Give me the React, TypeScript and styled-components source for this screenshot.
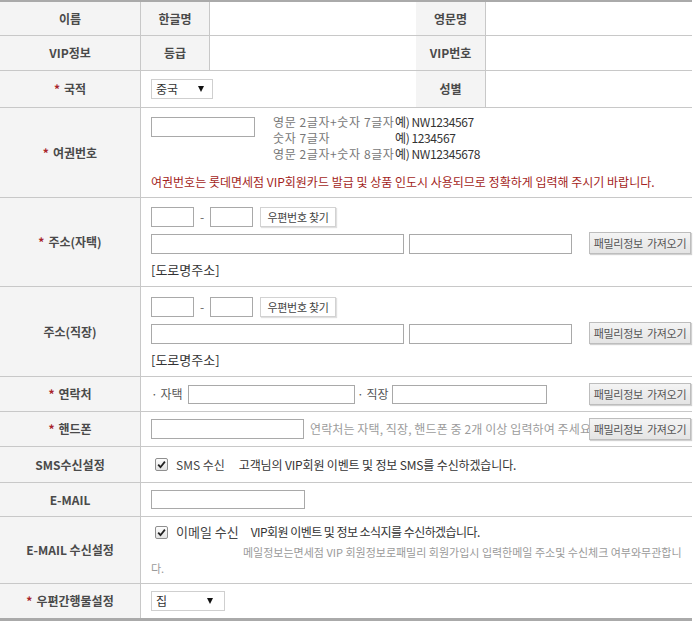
import React from 'react';
import styled, { createGlobalStyle } from 'styled-components';

const GlobalStyle = createGlobalStyle`
  html, body {
    margin: 0;
    padding: 0;
    background: #fff;
  }
  body {
    font-family: 'Noto Sans CJK KR', 'Noto Sans', sans-serif;
    font-size: 12px;
    line-height: 16px;
    color: #333;
  }
  * {
    box-sizing: border-box;
  }
`;

const Form = styled.div`
  width: 692px;
  border-top: 2px solid #aaa;
  border-bottom: 3px solid #aaa;
`;

const Row = styled.div<{ $h: number; $cols?: string }>`
  display: grid;
  grid-template-columns: ${(p) => p.$cols ?? '141px 1fr'};
  height: ${(p) => p.$h}px;
  border-bottom: 1px solid #c8c8c8;

  &:last-child {
    border-bottom: 0;
  }
`;

const Label = styled.div`
  display: flex;
  align-items: center;
  justify-content: center;
  background: #f4f4f4;
  border-right: 1px solid #c8c8c8;
  font-weight: bold;
  font-size: 12px;
  color: #4a4a4a;
  white-space: nowrap;
`;

const Star = styled.span`
  color: #a8242a;
  margin-right: 4px;
  font-weight: bold;
`;

const Cell = styled.div<{ $top?: number }>`
  display: flex;
  flex-direction: column;
  justify-content: ${(p) => (p.$top !== undefined ? 'flex-start' : 'center')};
  padding: ${(p) => p.$top ?? 0}px 1px 0 10px;
  min-width: 0;
`;

const Line = styled.div<{ $mt?: number; $top?: boolean }>`
  display: flex;
  align-items: ${(p) => (p.$top ? 'flex-start' : 'center')};
  margin-top: ${(p) => p.$mt ?? 0}px;
  min-width: 0;
`;

const TextBox = styled.input<{ $w: number; $h?: number; $mt?: number }>`
  flex: none;
  width: ${(p) => p.$w}px;
  height: ${(p) => p.$h ?? 20}px;
  margin: ${(p) => p.$mt ?? 0}px 0 0 0;
  padding: 0 3px;
  border: 1px solid #a9a9a9;
  background: #fff;
  font: inherit;
  outline: none;
`;

const SelectBox = styled.div<{ $w: number; $pr: number }>`
  flex: none;
  display: flex;
  align-items: center;
  justify-content: space-between;
  width: ${(p) => p.$w}px;
  height: 20px;
  padding: 0 ${(p) => p.$pr}px 0 4px;
  border: 1px solid #cfcfcf;
  background: #fff;
  color: #333;
`;

const Arrow = styled.span`
  width: 0;
  height: 0;
  border-left: 3.5px solid transparent;
  border-right: 3.5px solid transparent;
  border-top: 6px solid #111;
`;

const Hints = styled.div`
  flex: none;
  width: 122px;
  margin-left: 18px;
  color: #777;
  letter-spacing: 0.6px;
  white-space: nowrap;
`;

const Examples = styled.div`
  color: #333;
  letter-spacing: -0.4px;
  white-space: nowrap;
`;

const Notice = styled.div`
  margin-top: 12px;
  color: #a31e22;
  white-space: nowrap;
`;

const Dash = styled.span`
  flex: none;
  width: 16px;
  text-align: center;
  color: #666;
`;

const ZipButton = styled.button`
  flex: none;
  width: 76px;
  height: 20px;
  margin-left: 7px;
  padding: 0;
  border: 1px solid #d2d2d2;
  background: #fff;
  box-shadow: 1px 1px 1px rgba(0, 0, 0, 0.12);
  font-family: inherit;
  font-size: 11px;
  color: #444;
  letter-spacing: -0.3px;
`;

const FamilyButton = styled.button<{ $mt?: number }>`
  flex: none;
  width: 102px;
  height: 22px;
  margin: ${(p) => p.$mt ?? 0}px 0 0 auto;
  padding: 0;
  border: 1px solid #bdbdbd;
  background: linear-gradient(#f4f4f4, #e4e4e4);
  box-shadow: 1px 1px 1px rgba(0, 0, 0, 0.18);
  font-family: inherit;
  font-size: 11px;
  color: #555;
  word-spacing: 2px;
  letter-spacing: -0.3px;
`;

const RoadName = styled.div`
  margin-top: 8px;
  font-size: 13px;
  color: #333;
`;

const Tag = styled.span<{ $w: number; $ml?: number }>`
  flex: none;
  width: ${(p) => p.$w}px;
  margin-left: ${(p) => p.$ml ?? 0}px;
  color: #555;
  white-space: nowrap;
`;

const PhoneHint = styled.span`
  flex: 1;
  min-width: 0;
  margin-left: 6px;
  overflow: hidden;
  white-space: nowrap;
  color: #9c9c9c;
  letter-spacing: 0.1px;
`;

const CheckMark = styled.span`
  flex: none;
  display: flex;
  align-items: center;
  justify-content: center;
  width: 13px;
  height: 13px;
  margin-left: 4px;
  border: 1px solid #8f8f8f;
  border-radius: 2px;
  background: linear-gradient(#fdfdfd, #e3e3e3);
`;

const ConsentName = styled.span<{ $size?: number }>`
  margin-left: 8px;
  font-size: ${(p) => p.$size ?? 12}px;
  color: #444;
  white-space: nowrap;
`;

const ConsentText = styled.span<{ $ml: number; $ls: number }>`
  margin-left: ${(p) => p.$ml}px;
  letter-spacing: ${(p) => p.$ls}px;
  color: #333;
  white-space: nowrap;
`;

const MailNote = styled.p`
  margin: 4px 0 0;
  text-indent: 92px;
  font-size: 11px;
  color: #9a9a9a;
  white-space: nowrap;
`;

function Required({ children }: { children: React.ReactNode }) {
  return (
    <Label>
      <Star>*</Star>
      {children}
    </Label>
  );
}

function Check() {
  return (
    <CheckMark>
      <svg width="9" height="9" viewBox="0 0 9 9">
        <path d="M1.2 4.6 L3.5 7.2 L7.9 1.6" fill="none" stroke="#222" strokeWidth="1.8" />
      </svg>
    </CheckMark>
  );
}

function AddressCell({ top }: { top: number }) {
  return (
    <Cell $top={top}>
      <Line>
        <TextBox $w={43} />
        <Dash>-</Dash>
        <TextBox $w={43} />
        <ZipButton>우편번호 찾기</ZipButton>
      </Line>
      <Line $mt={7} $top>
        <TextBox $w={253} />
        <TextBox $w={163} style={{ marginLeft: 5 }} />
        <FamilyButton $mt={-2}>패밀리정보 가져오기</FamilyButton>
      </Line>
      <RoadName>[도로명주소]</RoadName>
    </Cell>
  );
}

export default function App() {
  return (
    <>
      <GlobalStyle />
      <Form>
        <Row $h={34} $cols="141px 69px 206px 70px 1fr">
          <Label>이름</Label>
          <Label>한글명</Label>
          <Cell />
          <Label>영문명</Label>
          <Cell />
        </Row>
        <Row $h={35} $cols="141px 69px 206px 70px 1fr">
          <Label>VIP정보</Label>
          <Label>등급</Label>
          <Cell />
          <Label>VIP번호</Label>
          <Cell />
        </Row>
        <Row $h={37} $cols="141px 275px 70px 1fr">
          <Required>국적</Required>
          <Cell>
            <Line>
              <SelectBox $w={62} $pr={8}>
                중국
                <Arrow />
              </SelectBox>
            </Line>
          </Cell>
          <Label>성별</Label>
          <Cell />
        </Row>
        <Row $h={90}>
          <Required>여권번호</Required>
          <Cell $top={6}>
            <Line $top>
              <TextBox $w={104} $mt={3} />
              <Hints>
                <div>영문 2글자+숫자 7글자</div>
                <div>숫자 7글자</div>
                <div>영문 2글자+숫자 8글자</div>
              </Hints>
              <Examples>
                <div>예) NW1234567</div>
                <div>예) 1234567</div>
                <div>예) NW12345678</div>
              </Examples>
            </Line>
            <Notice>
              여권번호는 롯데면세점 VIP회원카드 발급 및 상품 인도시 사용되므로 정확하게 입력해 주시기 바랍니다.
            </Notice>
          </Cell>
        </Row>
        <Row $h={89}>
          <Required>주소(자택)</Required>
          <AddressCell top={9} />
        </Row>
        <Row $h={90}>
          <Label>주소(직장)</Label>
          <AddressCell top={10} />
        </Row>
        <Row $h={35}>
          <Required>연락처</Required>
          <Cell>
            <Line>
              <Tag $w={37}>· 자택</Tag>
              <TextBox $w={167} $h={19} />
              <Tag $w={35} $ml={2}>· 직장</Tag>
              <TextBox $w={155} $h={19} />
              <FamilyButton>패밀리정보 가져오기</FamilyButton>
            </Line>
          </Cell>
        </Row>
        <Row $h={35}>
          <Required>핸드폰</Required>
          <Cell>
            <Line>
              <TextBox $w={153} />
              <PhoneHint>연락처는 자택, 직장, 핸드폰 중 2개 이상 입력하여 주세요.</PhoneHint>
              <FamilyButton>패밀리정보 가져오기</FamilyButton>
            </Line>
          </Cell>
        </Row>
        <Row $h={36}>
          <Label>SMS수신설정</Label>
          <Cell>
            <Line>
              <Check />
              <ConsentName>SMS 수신</ConsentName>
              <ConsentText $ml={14} $ls={-0.15}>
                고객님의 VIP회원 이벤트 및 정보 SMS를 수신하겠습니다.
              </ConsentText>
            </Line>
          </Cell>
        </Row>
        <Row $h={34}>
          <Label>E-MAIL</Label>
          <Cell>
            <Line>
              <TextBox $w={154} $h={19} />
            </Line>
          </Cell>
        </Row>
        <Row $h={67}>
          <Label>E-MAIL 수신설정</Label>
          <Cell $top={7}>
            <Line>
              <Check />
              <ConsentName $size={13}>이메일 수신</ConsentName>
              <ConsentText $ml={12} $ls={-0.55}>
                VIP회원 이벤트 및 정보 소식지를 수신하겠습니다.
              </ConsentText>
            </Line>
            <MailNote>
              메일정보는면세점 VIP 회원정보로패밀리 회원가입시 입력한메일 주소및 수신체크 여부와무관합니
              <br />
              다.
            </MailNote>
          </Cell>
        </Row>
        <Row $h={34}>
          <Required>우편간행물설정</Required>
          <Cell>
            <Line>
              <SelectBox $w={74} $pr={11}>
                집
                <Arrow />
              </SelectBox>
            </Line>
          </Cell>
        </Row>
      </Form>
    </>
  );
}
